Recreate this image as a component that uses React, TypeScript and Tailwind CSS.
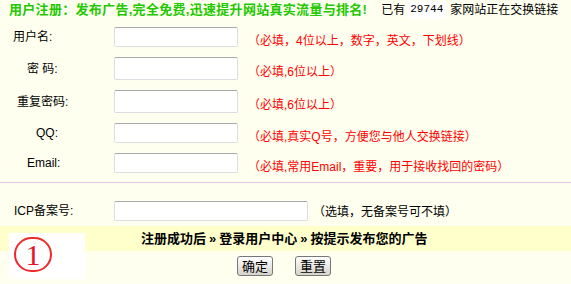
import React from "react";

const inputCls =
  "w-[124px] h-full shrink-0 bg-white border border-[#dcdde3] border-t-[#a9a9ad] rounded-[2px]";

function Row({
  label,
  pl,
  h,
  mt,
  hint,
}: {
  label: string;
  pl: string;
  h: string;
  mt: string;
  hint: string;
}) {
  return (
    <div className={`flex items-center ${h} ${mt}`}>
      <div className={`w-[114px] shrink-0 ${pl} text-black`}>{label}</div>
      <div className={inputCls} />
      <div className="ml-[10px] mt-[7px] text-[#ff0000] whitespace-nowrap">{hint}</div>
    </div>
  );
}

export default function App() {
  return (
    <div className="w-[571px] h-[284px] bg-[#fffff0] relative overflow-hidden text-[12px] leading-none font-['Liberation_Sans','Noto_Sans_CJK_SC',sans-serif]">
      <div className="flex items-center h-[19px] pl-[9px] whitespace-nowrap">
        <span className="text-[13px] font-bold text-[#22c800] tracking-[0.3px]">
          用户注册：发布广告,完全免费,迅速提升网站真实流量与排名!
        </span>
        <span className="ml-[14px] text-black">已有</span>
        <span className="ml-[2px] bg-white h-[18px] w-[39px] flex items-center justify-center text-black font-['Liberation_Mono',monospace] text-[11px]">
          29744
        </span>
        <span className="ml-[4px] text-black">家网站正在交换链接</span>
      </div>

      <Row label="用户名:" pl="pl-[13px]" h="h-[20px]" mt="mt-[8px]" hint="（必填，4位以上，数字，英文，下划线）" />
      <Row label="密 码:" pl="pl-[27px]" h="h-[23px]" mt="mt-[10px]" hint="（必填,6位以上）" />
      <Row label="重复密码:" pl="pl-[17px]" h="h-[23px]" mt="mt-[10px]" hint="（必填,6位以上）" />
      <Row label="QQ:" pl="pl-[36px]" h="h-[20px]" mt="mt-[10px]" hint="（必填,真实Q号，方便您与他人交换链接）" />
      <Row label="Email:" pl="pl-[27px]" h="h-[20px]" mt="mt-[10px]" hint="（必填,常用Email，重要，用于接收找回的密码）" />

      <div className="mt-[9px] h-px bg-[#e6c6e6]" />

      <div className="flex items-center h-[20px] mt-[18px]">
        <div className="w-[114px] shrink-0 pl-[14px] text-black">ICP备案号:</div>
        <div className="w-[194px] h-full shrink-0 bg-white border border-[#dcdde3] border-t-[#a9a9ad] rounded-[2px]" />
        <div className="ml-[5px] mt-[2px] text-black whitespace-nowrap">（选填，无备案号可不填）</div>
      </div>

      <div className="mt-[5px] h-[25px] bg-[#ffffcc] flex items-center pl-[141px]">
        <span className="text-[13px] font-bold text-black whitespace-nowrap">
          注册成功后<span className="mx-[3px]">»</span>登录用户中心<span className="mx-[3px]">»</span>按提示发布您的广告
        </span>
      </div>

      <div className="mt-[5px] h-[20px] flex pl-[237px] gap-[22px]">
        <button className="w-[36px] h-[20px] border border-[#777] rounded-[3px] bg-gradient-to-b from-white to-[#d6d3cc] text-[13px] text-black flex items-center justify-center">
          确定
        </button>
        <button className="w-[36px] h-[20px] border border-[#777] rounded-[3px] bg-gradient-to-b from-white to-[#d6d3cc] text-[13px] text-black flex items-center justify-center">
          重置
        </button>
      </div>

      <div className="absolute left-[9px] top-[233px] w-[76px] h-[46px] bg-white">
        <div className="ml-[5px] mt-[4px] w-[38px] h-[35px] rounded-full border-2 border-[#ee2a2a] flex items-center justify-center">
          <span className="text-[30px] leading-none text-[#e8102a] font-['Liberation_Serif',serif]">1</span>
        </div>
      </div>
    </div>
  );
}
